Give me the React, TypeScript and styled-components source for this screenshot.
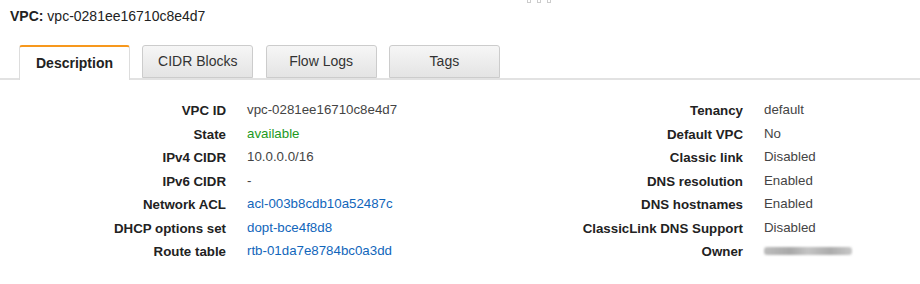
import React from "react";
import styled, { createGlobalStyle } from "styled-components";

const Global = createGlobalStyle`
  html, body { margin: 0; padding: 0; background: #fff; }
  body { font-family: "Liberation Sans", Arial, Helvetica, sans-serif; color: #333; }
`;

const Page = styled.div`
  width: 920px;
  height: 284px;
  position: relative;
  overflow: hidden;
  background: #fff;
`;

const Grip = styled.div`
  position: absolute;
  top: 0;
  left: 527px;
  display: flex;
  gap: 6px;
  & > span {
    width: 4px;
    height: 3px;
    border: 1px solid #ccc;
    border-top: none;
    box-sizing: border-box;
  }
`;

const Title = styled.div`
  padding: 6px 0 0 10px;
  height: 20px;
  line-height: 20px;
  font-size: 14px;
  color: #222;
  & > b { font-weight: bold; }
`;

const TabBar = styled.div`
  margin-top: 19px;
  display: flex;
  gap: 12.3px;
  padding-left: 19px;
  border-bottom: 2px solid #e2e2e2;
  height: 33px;
`;

const Tab = styled.div<{ $active?: boolean }>`
  width: 111px;
  height: ${(p) => (p.$active ? "35px" : "33px")};
  box-sizing: border-box;
  border: 1px solid ${(p) => (p.$active ? "#ddd" : "#ccc")};
  border-top: ${(p) => (p.$active ? "2px solid #f7981d" : "1px solid #ccc")};
  border-bottom: ${(p) => (p.$active ? "none" : "1px solid #ccc")};
  border-radius: 3px 3px 0 0;
  background: ${(p) => (p.$active ? "#fff" : "linear-gradient(#f6f6f6, #e4e4e4)")};
  display: flex;
  align-items: center;
  justify-content: center;
  padding-bottom: ${(p) => (p.$active ? "1px" : "1px")};
  font-size: 14px;
  font-weight: ${(p) => (p.$active ? "bold" : "normal")};
  color: ${(p) => (p.$active ? "#222" : "#333")};
  position: relative;
  z-index: 1;
`;

const Details = styled.div`
  display: flex;
  padding-top: 19px;
`;

const Section = styled.div<{ $labelWidth: number; $width?: number }>`
  display: grid;
  grid-template-columns: ${(p) => p.$labelWidth}px 1fr;
  column-gap: 21px;
  grid-auto-rows: 23.5px;
  width: ${(p) => (p.$width ? `${p.$width}px` : "auto")};
  flex: ${(p) => (p.$width ? "none" : "1")};
  font-size: 13.3px;
`;

const Label = styled.div`
  text-align: right;
  font-weight: bold;
  color: #222;
  line-height: 23.5px;
  white-space: nowrap;
`;

const Value = styled.div<{ $kind?: "link" | "ok" | "text" }>`
  line-height: 23.5px;
  white-space: nowrap;
  margin-top: -1px;
  color: ${(p) => (p.$kind === "link" ? "#1166bb" : p.$kind === "ok" ? "#1e9a1e" : "#444")};
`;

const Blurred = styled.span`
  display: inline-block;
  width: 88px;
  height: 8px;
  margin-top: 8px;
  vertical-align: top;
  background: linear-gradient(90deg, #bdbdbd, #a9a9a9 30%, #c4c4c4 50%, #acacac 75%, #c8c8c8);
  filter: blur(1.2px);
  border-radius: 3px;
`;

type Row = { label: string; value: React.ReactNode; kind?: "link" | "ok" | "text" };

const left: Row[] = [
  { label: "VPC ID", value: "vpc-0281ee16710c8e4d7" },
  { label: "State", value: "available", kind: "ok" },
  { label: "IPv4 CIDR", value: "10.0.0.0/16" },
  { label: "IPv6 CIDR", value: "-" },
  { label: "Network ACL", value: "acl-003b8cdb10a52487c", kind: "link" },
  { label: "DHCP options set", value: "dopt-bce4f8d8", kind: "link" },
  { label: "Route table", value: "rtb-01da7e8784bc0a3dd", kind: "link" },
];

const right: Row[] = [
  { label: "Tenancy", value: "default" },
  { label: "Default VPC", value: "No" },
  { label: "Classic link", value: "Disabled" },
  { label: "DNS resolution", value: "Enabled" },
  { label: "DNS hostnames", value: "Enabled" },
  { label: "ClassicLink DNS Support", value: "Disabled" },
  { label: "Owner", value: <Blurred /> },
];

const tabs = ["Description", "CIDR Blocks", "Flow Logs", "Tags"];

export default function App() {
  return (
    <Page>
      <Global />
      <Grip>
        <span />
        <span />
        <span />
      </Grip>
      <Title>
        <b>VPC:</b> vpc-0281ee16710c8e4d7
      </Title>
      <TabBar>
        {tabs.map((t, i) => (
          <Tab key={t} $active={i === 0}>
            {t}
          </Tab>
        ))}
      </TabBar>
      <Details>
        <Section $labelWidth={226} $width={460}>
          {left.map((r) => (
            <React.Fragment key={r.label}>
              <Label>{r.label}</Label>
              <Value $kind={r.kind}>{r.value}</Value>
            </React.Fragment>
          ))}
        </Section>
        <Section $labelWidth={283}>
          {right.map((r) => (
            <React.Fragment key={r.label}>
              <Label>{r.label}</Label>
              <Value $kind={r.kind}>{r.value}</Value>
            </React.Fragment>
          ))}
        </Section>
      </Details>
    </Page>
  );
}
